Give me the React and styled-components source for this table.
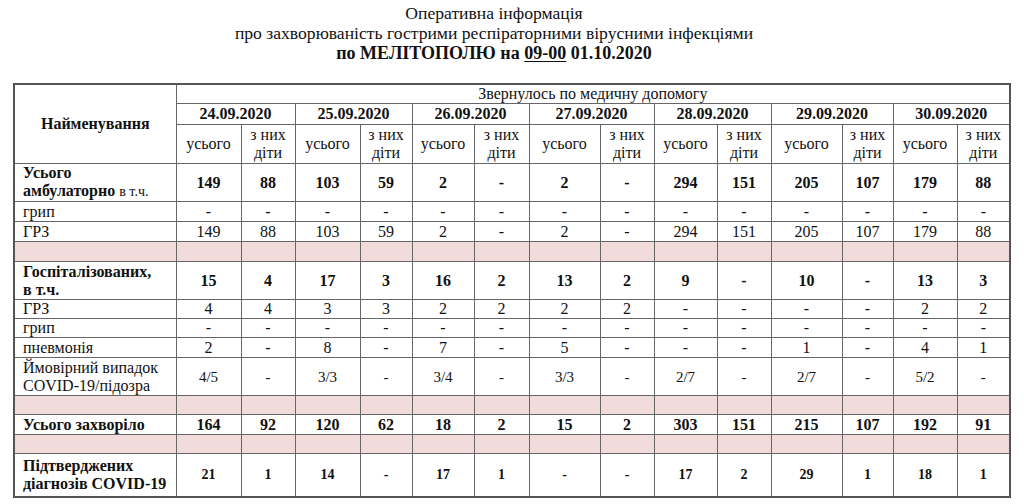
import React from "react";
import styled, { createGlobalStyle } from "styled-components";

const SERIF = '"Liberation Serif", "Times New Roman", serif';

const Global = createGlobalStyle`
  html, body { margin: 0; padding: 0; background: #fff; }
`;

const Page = styled.div`
  font-family: ${SERIF};
  color: #111;
  padding: 3px 0 0 13px;
  width: 1011px;
  box-sizing: border-box;
`;

const Title = styled.div`
  width: 962px;
  text-align: center;
  font-family: ${SERIF};
  line-height: 20px;
`;

const TitleLine = styled.div`
  font-family: ${SERIF};
  font-weight: ${(p) => (p.$bold ? 700 : 400)};
  font-size: ${(p) => (p.$bold ? "18px" : "17.6px")};
`;

const Under = styled.span`
  text-decoration: underline;
  text-underline-offset: 2px;
`;

const Table = styled.table`
  margin-top: 20px;
  width: 996px;
  table-layout: fixed;
  border-collapse: collapse;
  border: 2px solid #555;
  font-family: ${SERIF};
  font-size: 16px;
  color: #111;
`;

const Cell = styled.td`
  border: 1px solid #666;
  padding: 0;
  text-align: center;
  vertical-align: middle;
  line-height: 18px;
  font-family: ${SERIF};
  font-weight: ${(p) => (p.$bold ? 700 : 400)};
  font-size: ${(p) => p.$size || "16px"};
  background: ${(p) => (p.$pink ? "#f2dcdb" : "transparent")};
`;

const HeadCell = styled(Cell).attrs({ as: "th" })`
  font-weight: ${(p) => (p.$bold ? 700 : 400)};
`;

const LabelCell = styled(Cell)`
  text-align: left;
  padding-left: 8px;
`;

const SmallNote = styled.span`
  font-weight: 400;
  font-size: 14px;
`;

const Row = styled.tr`
  height: ${(p) => p.$h}px;
`;

const widths = [162, 65, 54, 65, 52, 62, 55, 71, 54, 63, 54, 71, 51, 64, 53];
const dates = ["24.09.2020", "25.09.2020", "26.09.2020", "27.09.2020", "28.09.2020", "29.09.2020", "30.09.2020"];
const D = "-";

const rows = [
  { h: 37, bold: true, label: (<><b>Усього<br />амбулаторно</b> <SmallNote>в т.ч.</SmallNote></>), v: [149, 88, 103, 59, 2, D, 2, D, 294, 151, 205, 107, 179, 88] },
  { h: 20, label: "грип", v: Array(14).fill(D) },
  { h: 20, label: "ГРЗ", v: [149, 88, 103, 59, 2, D, 2, D, 294, 151, 205, 107, 179, 88] },
  { h: 20, pink: true },
  { h: 38, bold: true, label: (<b>Госпіталізованих,<br />в т.ч.</b>), v: [15, 4, 17, 3, 16, 2, 13, 2, 9, D, 10, D, 13, 3] },
  { h: 19, label: "ГРЗ", v: [4, 4, 3, 3, 2, 2, 2, 2, D, D, D, D, 2, 2] },
  { h: 19, label: "грип", v: Array(14).fill(D) },
  { h: 20, label: "пневмонія", v: [2, D, 8, D, 7, D, 5, D, D, D, 1, D, 4, 1] },
  { h: 38, label: (<>Ймовірний випадок<br />COVID-19/підозра</>), v: ["4/5", D, "3/3", D, "3/4", D, "3/3", D, "2/7", D, "2/7", D, "5/2", D], size: "15px" },
  { h: 19, pink: true },
  { h: 20, bold: true, label: (<b>Усього захворіло</b>), v: [164, 92, 120, 62, 18, 2, 15, 2, 303, 151, 215, 107, 192, 91] },
  { h: 19, pink: true },
  { h: 43, bold: true, label: (<b>Підтверджених<br />діагнозів COVID-19</b>), v: [21, 1, 14, D, 17, 1, D, D, 17, 2, 29, 1, 18, 1], size: "14px" },
];

export default function App() {
  return (
    <>
      <Global />
      <Page>
        <Title>
          <TitleLine>Оперативна інформація</TitleLine>
          <TitleLine>про захворюваність гострими респіраторними вірусними інфекціями</TitleLine>
          <TitleLine $bold>
            по МЕЛІТОПОЛЮ на <Under>09-00</Under> 01.10.2020
          </TitleLine>
        </Title>
        <Table>
          <colgroup>
            {widths.map((w, i) => (
              <col key={i} style={{ width: w }} />
            ))}
          </colgroup>
          <thead>
            <Row $h={19}>
              <HeadCell rowSpan={3} $bold>Найменування</HeadCell>
              <HeadCell colSpan={14}>Звернулось по медичну допомогу</HeadCell>
            </Row>
            <Row $h={21}>
              {dates.map((d) => (
                <HeadCell key={d} colSpan={2} $bold>{d}</HeadCell>
              ))}
            </Row>
            <Row $h={39}>
              {dates.map((d) => (
                <React.Fragment key={d}>
                  <HeadCell>усього</HeadCell>
                  <HeadCell>з них<br />діти</HeadCell>
                </React.Fragment>
              ))}
            </Row>
          </thead>
          <tbody>
            {rows.map((r, i) =>
              r.pink ? (
                <Row key={i} $h={r.h}>
                  {widths.map((_, j) => (
                    <Cell key={j} $pink />
                  ))}
                </Row>
              ) : (
                <Row key={i} $h={r.h}>
                  <LabelCell>{r.label}</LabelCell>
                  {r.v.map((x, j) => (
                    <Cell key={j} $bold={r.bold} $size={r.size}>{x}</Cell>
                  ))}
                </Row>
              )
            )}
          </tbody>
        </Table>
      </Page>
    </>
  );
}
